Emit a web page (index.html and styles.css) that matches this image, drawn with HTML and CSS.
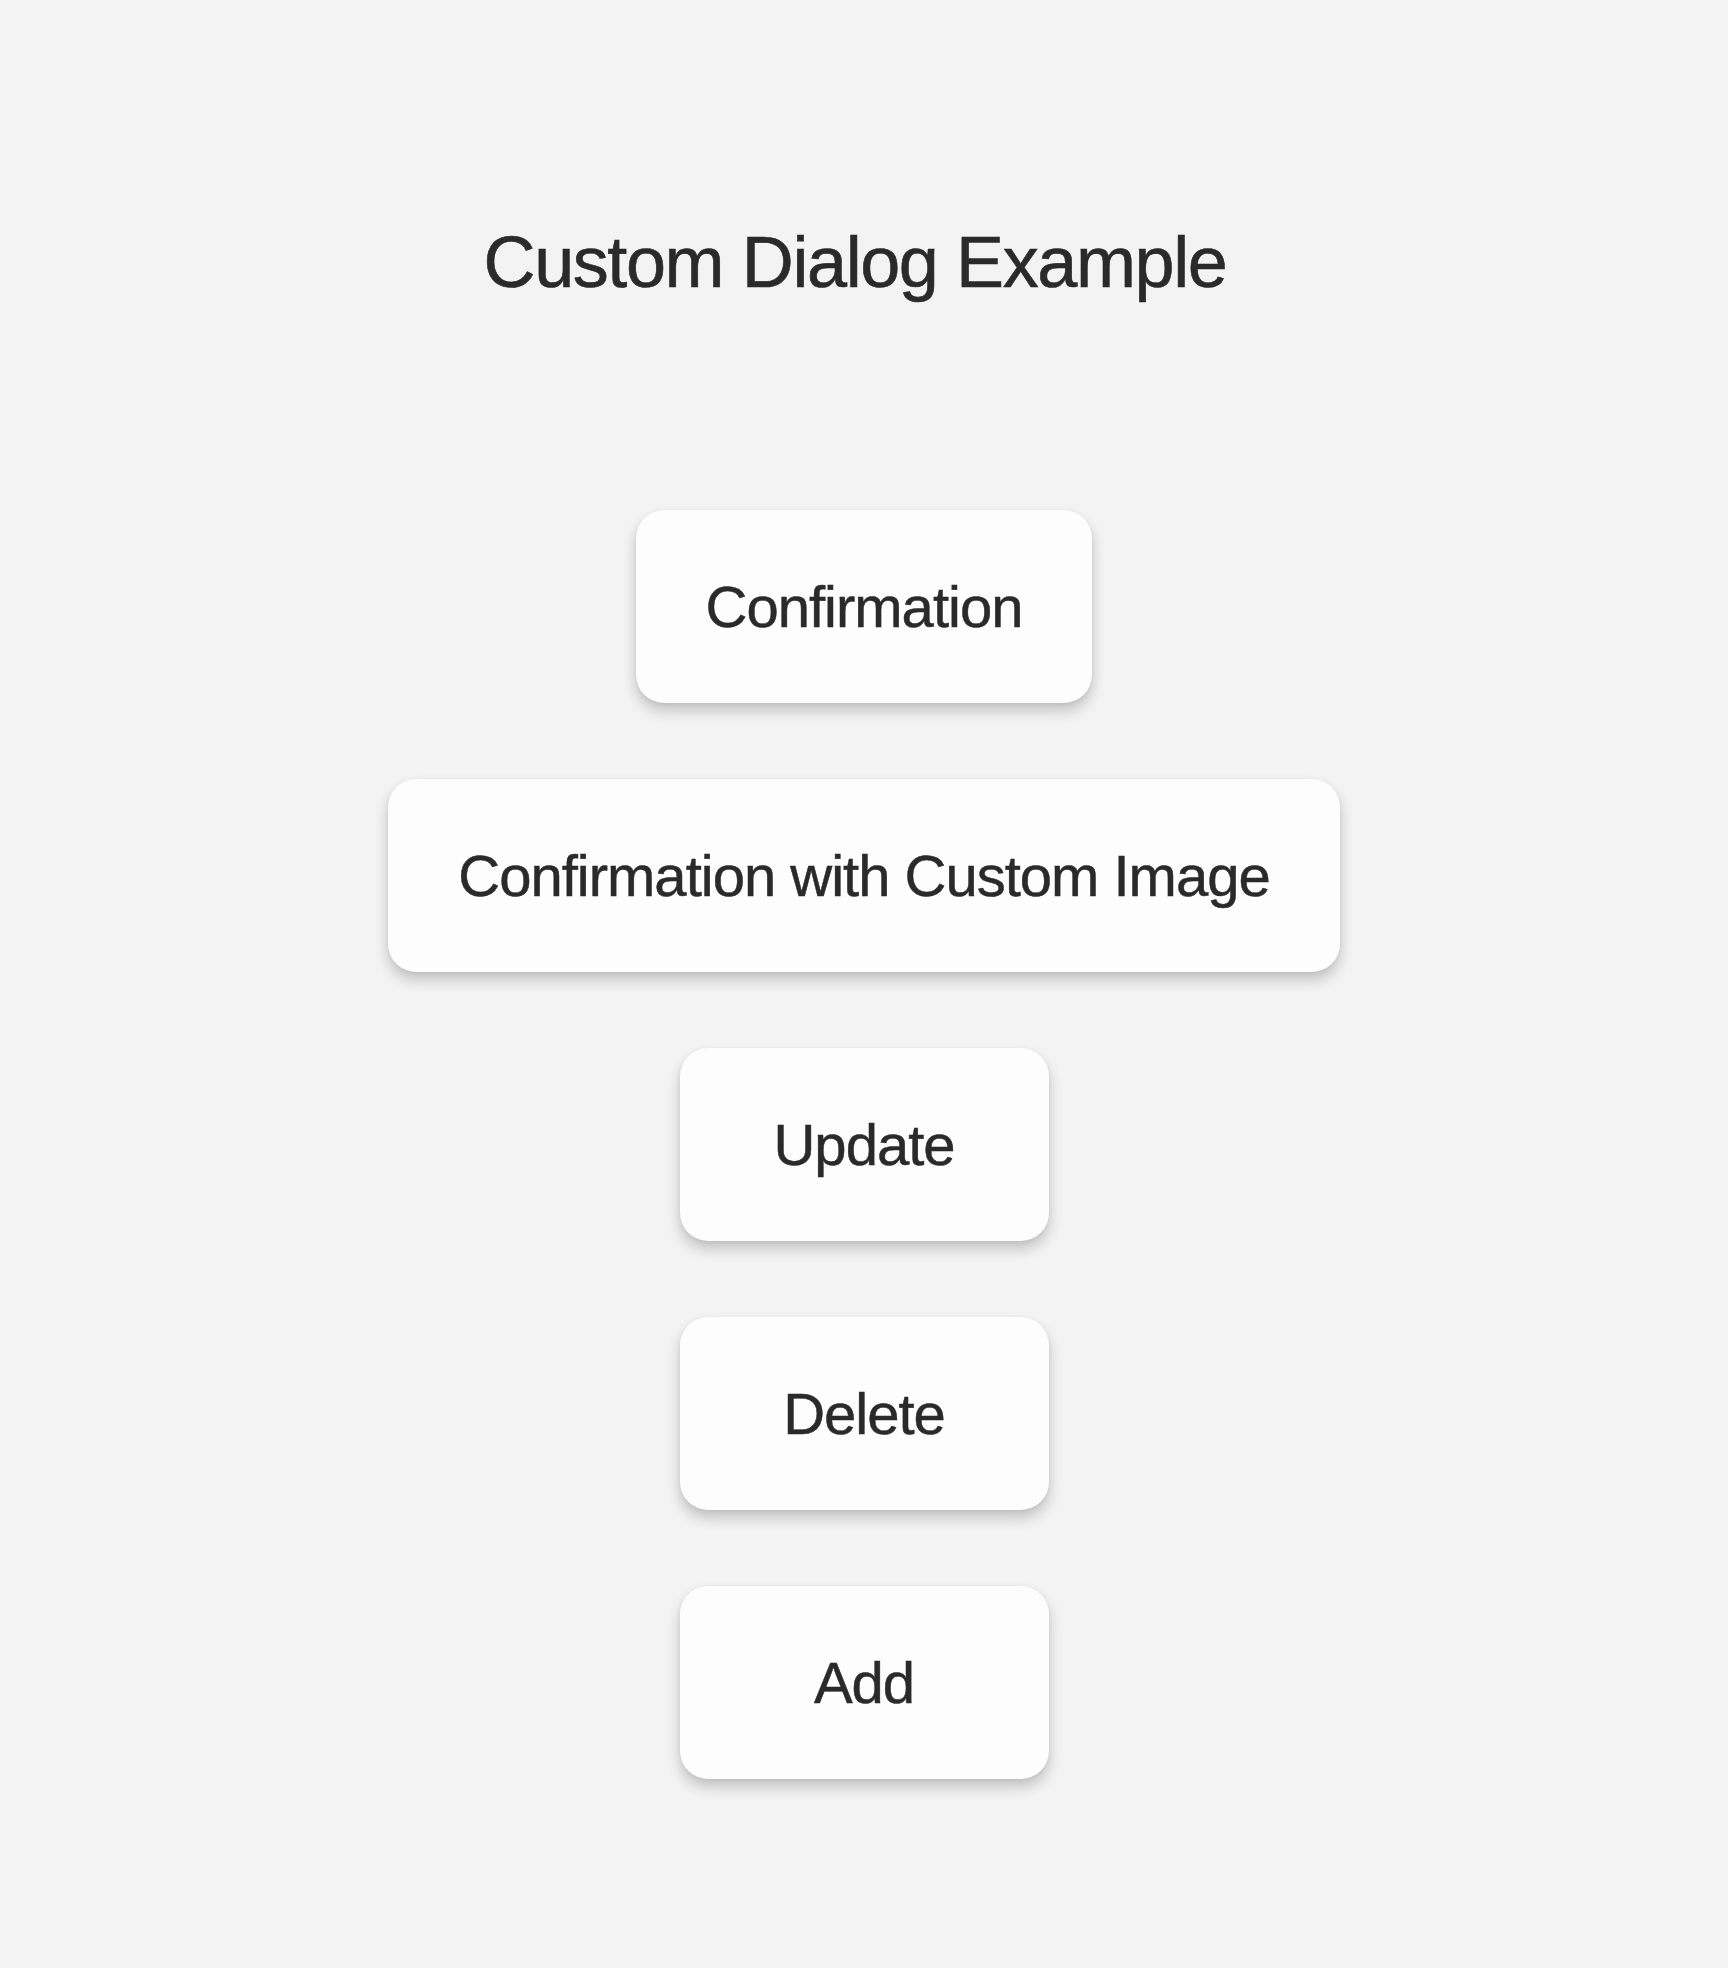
FILE: index.html
```html
<!DOCTYPE html>
<html lang="en">
<head>
<meta charset="utf-8">
<title>Custom Dialog Example</title>
<link rel="stylesheet" href="styles.css">
</head>
<body>
<main class="page">
  <h1 class="title">Custom Dialog Example</h1>
  <div class="actions">
    <button class="btn" type="button">Confirmation</button>
    <button class="btn" type="button">Confirmation with Custom Image</button>
    <button class="btn" type="button">Update</button>
    <button class="btn" type="button">Delete</button>
    <button class="btn" type="button">Add</button>
  </div>
</main>
</body>
</html>
```

FILE: styles.css
```css
html, body {
  margin: 0;
  padding: 0;
  background: #f3f3f4;
}
body {
  font-family: "Liberation Sans", Arial, Helvetica, sans-serif;
  color: #2a2a2a;
  min-height: 1968px;
}
.page {
  display: flex;
  flex-direction: column;
  align-items: center;
  padding-top: 226px;
}
.title {
  margin: 0;
  padding-right: 18px;
  font-size: 72px;
  line-height: 72px;
  font-weight: 400;
  letter-spacing: -1.4px;
  color: #2a2a2a;
  -webkit-text-stroke: 0.6px #2a2a2a;
}
.actions {
  display: flex;
  flex-direction: column;
  align-items: center;
  gap: 76px;
  margin-top: 212px;
}
.btn {
  box-sizing: border-box;
  height: 193px;
  min-width: 369px;
  padding: 0 70px;
  border: none;
  border-radius: 28px;
  background: #fdfdfd;
  box-shadow: 0 8px 14px rgba(0, 0, 0, 0.2), 0 1px 4px rgba(0, 0, 0, 0.06);
  font-family: "Liberation Sans", Arial, Helvetica, sans-serif;
  font-size: 58px;
  line-height: 1;
  letter-spacing: -1px;
  color: #2a2a2a;
  -webkit-text-stroke: 0.5px #2a2a2a;
  cursor: pointer;
}
```
